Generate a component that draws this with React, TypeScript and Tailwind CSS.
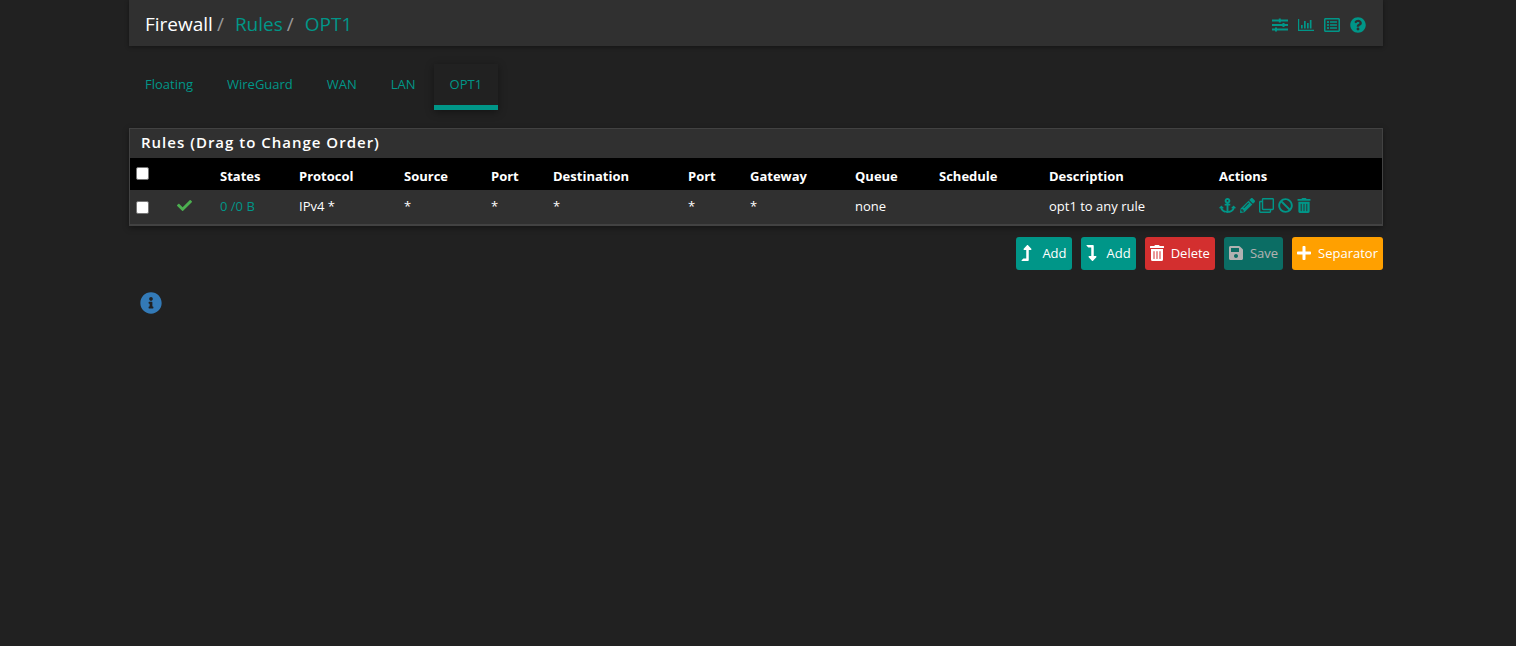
import React from "react";
import { FaAnchor, FaPencilAlt, FaRegClone, FaBan, FaTrashAlt, FaLevelUpAlt, FaLevelDownAlt, FaSave, FaPlus, FaCheck, FaQuestionCircle, FaInfoCircle, FaRegListAlt } from "react-icons/fa";

function SlidersIcon() {
  return (
    <svg width="16" height="14" viewBox="0 0 16 14" fill="currentColor" aria-hidden="true">
      <path d="M0 1.500h6.800V.5h2v1H16v2H8.800v1h-2v-1H0zM0 6h10.500V5h2v1H16v2h-3.500v1h-2V8H0zM0 10.500h3v-1h2v1h11v2H5v1H3v-1H0z" />
    </svg>
  );
}

function ChartIcon() {
  return (
    <svg width="16" height="14" viewBox="0 0 16 14" fill="currentColor" aria-hidden="true">
      <path d="M0 1h1.200v10.800H16V13H0zM3 7h1.700v3.500H3zM6 3h1.700v7.500H6zM9 5h1.700v5.500H9zM11.800 2h1.700v8.500h-1.700z" />
    </svg>
  );
}

const tabs = ["Floating", "WireGuard", "WAN", "LAN", "OPT1"];

const columns = [
  { name: "States", width: "w-[79px]", value: "0 /0 B" },
  { name: "Protocol", width: "w-[105px]", value: "IPv4 *" },
  { name: "Source", width: "w-[87px]", value: "*" },
  { name: "Port", width: "w-[62px]", value: "*" },
  { name: "Destination", width: "w-[135px]", value: "*" },
  { name: "Port", width: "w-[62px]", value: "*" },
  { name: "Gateway", width: "w-[105px]", value: "*" },
  { name: "Queue", width: "w-[84px]", value: "none" },
  { name: "Schedule", width: "w-[110px]", value: "" },
  { name: "Description", width: "w-[170px]", value: "opt1 to any rule" },
];

const actions = [
  { label: "Add associated rule", Icon: FaAnchor, size: "w-[17px]" },
  { label: "Edit", Icon: FaPencilAlt, size: "w-[15px]" },
  { label: "Copy", Icon: FaRegClone, size: "w-[15px]" },
  { label: "Disable", Icon: FaBan, size: "w-[15px]" },
  { label: "Delete", Icon: FaTrashAlt, size: "w-[14px]" },
];

const button = "flex h-[33px] items-center gap-[7px] rounded-[3px] px-[5px] pb-px text-white";
const buttonIcon = "h-4 w-[14px]";
const arrowIcon = "mr-[3px] h-4 w-[11px]";
const checkbox = "block size-[13px] appearance-none rounded-[2px] border border-[#767676] bg-white checked:bg-[#009688]";

export default function App() {
  return (
    <div className="min-h-screen bg-[#212121] pr-[133px] pl-[129px] font-['Open_Sans','Noto_Sans',sans-serif] text-[13px] leading-5 text-white">
      <header className="flex h-[46px] items-center justify-between bg-[#303030] pr-[17px] pl-4 shadow-[0_1px_4px_rgba(0,0,0,0.4)]">
        <nav aria-label="Breadcrumb">
          <ol className="flex pt-px text-[19px] leading-6">
            <li>Firewall</li>
            <li className="pr-[11px] pl-1 text-[#999]">/</li>
            <li><a href="#rules" className="text-[#009688]">Rules</a></li>
            <li className="pr-[11px] pl-1 text-[#999]">/</li>
            <li><a href="#opt1" className="text-[#009688]">OPT1</a></li>
          </ol>
        </nav>
        <div className="flex items-center gap-[10px] pt-1 text-[#009688]">
          <a href="#settings" aria-label="Settings"><SlidersIcon /></a>
          <a href="#status" aria-label="Status"><ChartIcon /></a>
          <a href="#logs" aria-label="Logs"><FaRegListAlt size={16} /></a>
          <a href="#help" aria-label="Help"><FaQuestionCircle size={16} /></a>
        </div>
      </header>

      <nav aria-label="Interfaces" className="mt-[18px] flex gap-[2px]">
        {tabs.map((tab) => (
          <a
            key={tab}
            href="#tab"
            className={
              tab === "OPT1"
                ? "h-[46px] border-b-[5px] border-[#009688] px-4 pt-[10px] text-[#009688] shadow-[0_2px_8px_rgba(0,0,0,0.4)]"
                : "h-[46px] px-4 pt-[10px] text-[#009688]"
            }
          >
            {tab}
          </a>
        ))}
      </nav>

      <section className="mt-[18px] border border-b-2 border-[#424242] bg-[#303030] shadow-[0_2px_6px_rgba(0,0,0,0.4)]">
        <h2 className="h-[29px] px-[11px] pt-[3px] text-[15px] font-semibold tracking-[1px]">Rules (Drag to Change Order)</h2>
        <table className="w-full table-fixed border-collapse text-left">
          <thead className="bg-black">
            <tr className="h-8">
              <th className="w-[42px] pb-[2px] pl-[6px]"><input type="checkbox" aria-label="Select all rules" className={checkbox} /></th>
              <th className="w-[48px]" />
              {columns.map((c, i) => (
                <th key={i} className={`${c.width} pt-[3px] font-bold`}>{c.name}</th>
              ))}
              <th className="pt-[3px] font-bold">Actions</th>
            </tr>
          </thead>
          <tbody>
            <tr className="h-[34px]">
              <td className="pl-[6px]"><input type="checkbox" aria-label="Select rule" className={checkbox} /></td>
              <td className="pb-[3px] pl-[5px] text-[#4caf50]"><FaCheck size={15} /></td>
              {columns.map((c, i) => (
                <td key={i} className="pb-[3px]">{i === 0 ? <a href="#states" className="text-[#009688]">{c.value}</a> : c.value}</td>
              ))}
              <td className="pb-[3px]">
                <div className="flex items-center gap-1 text-[#009688]">
                  {actions.map(({ label, Icon, size }) => (
                    <a key={label} href="#action" aria-label={label}><Icon className={`${size} h-[15px]`} /></a>
                  ))}
                </div>
              </td>
            </tr>
          </tbody>
        </table>
      </section>

      <div className="mt-[11px] flex justify-end gap-[9px]">
        <button className={`${button} bg-[#009688]`}><FaLevelUpAlt className={arrowIcon} />Add</button>
        <button className={`${button} bg-[#009688]`}><FaLevelDownAlt className={arrowIcon} />Add</button>
        <button className={`${button} bg-[#d32f2f]`}><FaTrashAlt className={buttonIcon} />Delete</button>
        <button disabled className={`${button} bg-[#009688] opacity-65`}><FaSave className={buttonIcon} />Save</button>
        <button className={`${button} bg-[#ffa000]`}><FaPlus className={buttonIcon} />Separator</button>
      </div>

      <button aria-label="Show information" className="mt-[22px] ml-[11px] block text-[#337ab7]"><FaInfoCircle size={22} /></button>
    </div>
  );
}
